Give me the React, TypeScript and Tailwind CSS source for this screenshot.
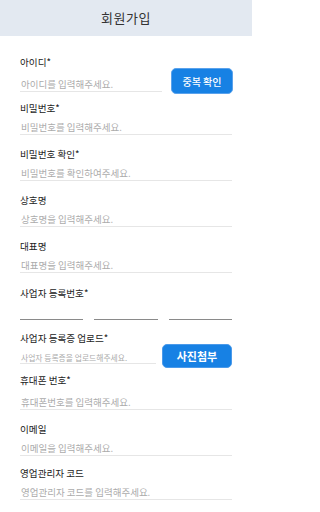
import React from "react";

const font = { fontFamily: '"Noto Sans CJK KR", "Noto Sans", sans-serif' };

function Label({ children }: { children: React.ReactNode }) {
  return <div className="h-[14px] leading-[14px] text-[9.6px] text-[#222] whitespace-nowrap">{children}</div>;
}

function Field({ label, placeholder, className }: { label: string; placeholder: string; className?: string }) {
  return (
    <div className={className}>
      <Label>{label}</Label>
      <input
        className="mt-[4px] block h-[16px] w-full border-b border-[#e6e6e6] bg-transparent px-[1px] text-[9.5px] leading-[15px] text-[#333] outline-none placeholder:text-[#ababab]"
        placeholder={placeholder}
      />
    </div>
  );
}

export default function App() {
  return (
    <div className="w-[252px] h-[512px] bg-white overflow-hidden" style={font}>
      <div className="h-[36px] bg-[#e3e9f1] flex items-center justify-center">
        <span className="text-[13px] text-[#333] tracking-[0.5px]">회원가입</span>
      </div>
      <div className="pl-[20px] pr-[20px] flex flex-col">
        <div className="mt-[19px]">
          <Label>아이디*</Label>
          <div className="flex items-start gap-[9px] -mt-[1px]">
            <input
              className="mt-[8px] block h-[16px] flex-1 min-w-0 border-b border-[#e6e6e6] bg-transparent px-[1px] text-[9.5px] leading-[15px] outline-none placeholder:text-[#ababab]"
              placeholder="아이디를 입력해주세요."
            />
            <button className="h-[26px] w-[62px] -mr-[1px] rounded-[5px] border border-[#5aa2ec] bg-[#1781e4] text-[10px] font-medium text-white whitespace-nowrap">
              중복 확인
            </button>
          </div>
        </div>
        <Field className="mt-[7px]" label="비밀번호*" placeholder="비밀번호를 입력해주세요." />
        <Field className="mt-[12px]" label="비밀번호 확인*" placeholder="비밀번호를 확인하여주세요." />
        <Field className="mt-[12px]" label="상호명" placeholder="상호명을 입력해주세요." />
        <Field className="mt-[12px]" label="대표명" placeholder="대표명을 입력해주세요." />
        <div className="mt-[13px]">
          <Label>사업자 등록번호*</Label>
          <div className="mt-[4px] flex gap-[11px]">
            <input className="block h-[16px] flex-1 min-w-0 border-b border-[#8a8a8a] bg-transparent outline-none" />
            <input className="block h-[16px] flex-1 min-w-0 border-b border-[#8a8a8a] bg-transparent outline-none" />
            <input className="block h-[16px] flex-1 min-w-0 border-b border-[#8a8a8a] bg-transparent outline-none" />
          </div>
        </div>
        <div className="mt-[11px]">
          <Label>사업자 등록증 업로드*</Label>
          <div className="flex items-start gap-[6px] -mt-[1px]">
            <input
              className="mt-[8px] block h-[12px] flex-1 min-w-0 border-b border-[#e6e6e6] bg-transparent px-[1px] text-[7.8px] leading-[11px] outline-none placeholder:text-[#ababab]"
              placeholder="사업자 등록증을 업로드해주세요."
            />
            <button className="h-[24px] w-[70px] rounded-[5px] border border-[#4b9aea] bg-[#1781e4] text-[11px] font-bold text-white whitespace-nowrap">
              사진첨부
            </button>
          </div>
        </div>
        <div className="mt-[5px]">
          <Label>휴대폰 번호*</Label>
          <input
            className="mt-[7px] block h-[16px] w-full border-b border-[#e6e6e6] bg-transparent px-[1px] text-[9.5px] leading-[15px] outline-none placeholder:text-[#ababab]"
            placeholder="휴대폰번호를 입력해주세요."
          />
        </div>
        <Field className="mt-[12px]" label="이메일" placeholder="이메일을 입력해주세요." />
        <Field className="mt-[10px]" label="영업관리자 코드" placeholder="영업관리자 코드를 입력해주세요." />
      </div>
    </div>
  );
}
